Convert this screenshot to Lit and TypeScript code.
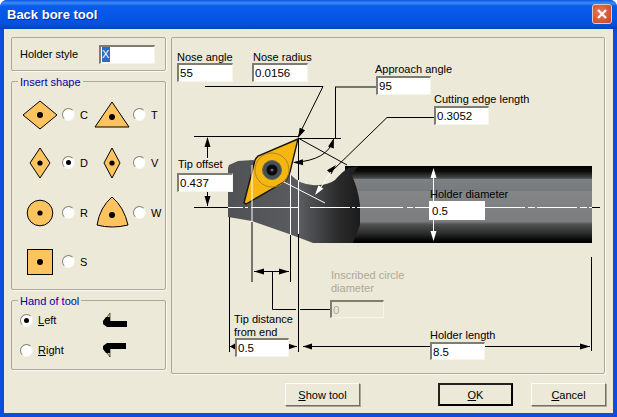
import { LitElement, html, css, svg } from "lit";
import { customElement } from "lit/decorators.js";
import { styleMap } from "lit/directives/style-map.js";

const X0 = 171;
const Y0 = 37;

const arrow = (x: number, y: number, deg: number, color = "#000", len = 10, half = 3) => {
  const a = (deg * Math.PI) / 180;
  const c = Math.cos(a), s = Math.sin(a);
  const bx = x - c * len, by = y - s * len;
  const pts = `${x},${y} ${bx - s * half},${by + c * half} ${bx + s * half},${by - c * half}`;
  return svg`<polygon points=${pts} fill=${color}></polygon>`;
};

const line = (d: string, color = "#000", w = 1) =>
  svg`<path d=${d} fill="none" stroke=${color} stroke-width=${w}></path>`;

const fields = [
  { x: 177, y: 63, w: 56, h: 19, v: "55" },
  { x: 252, y: 63, w: 56, h: 19, v: "0.0156" },
  { x: 376, y: 76, w: 55, h: 19, v: "95" },
  { x: 434, y: 106, w: 55, h: 19, v: "0.3052" },
  { x: 177, y: 173, w: 56, h: 19, v: "0.437" },
  { x: 429, y: 201, w: 56, h: 19, v: "0.5", white: true },
  { x: 330, y: 300, w: 54, h: 18, v: "0", off: true },
  { x: 235, y: 338, w: 54, h: 19, v: "0.5" },
  { x: 430, y: 342, w: 55, h: 18, v: "8.5" },
];

const labels = [
  { x: 177, y: 51, t: "Nose angle" },
  { x: 253, y: 51, t: "Nose radius" },
  { x: 375, y: 63, t: "Approach angle" },
  { x: 434, y: 93, t: "Cutting edge length" },
  { x: 178, y: 158, t: "Tip offset" },
  { x: 430, y: 188, t: "Holder diameter" },
  { x: 331, y: 269, t: "Inscribed circle", off: true },
  { x: 331, y: 282, t: "diameter", off: true },
  { x: 234, y: 313, t: "Tip distance" },
  { x: 234, y: 326, t: "from end" },
  { x: 430, y: 329, t: "Holder length" },
];

const centre: [number, number][] = [
  [228, 243], [245, 248], [251, 299], [310, 350], [352, 355], [357, 403], [407, 413], [415, 429],
  [485, 525], [528, 535], [537, 577], [580, 587], [589, 592],
];

const shapes: Record<string, unknown> = {
  C: svg`<svg class="ico" width="38" height="30" viewBox="21 100 38 30"><polygon points="23,115 40,101 57,115 40,129" class="ins"></polygon><circle cx="40" cy="115" r="3" fill="#000"></circle></svg>`,
  T: svg`<svg class="ico" width="36" height="30" viewBox="95 100 36 30"><polygon points="113,102 130,127 96,127" class="ins"></polygon><circle cx="113" cy="117" r="3" fill="#000"></circle></svg>`,
  D: svg`<svg class="ico" width="38" height="34" viewBox="22 146 38 34"><polygon points="41,148 51,163 41,178 31,163" class="ins"></polygon><circle cx="41" cy="163" r="2.6" fill="#000"></circle></svg>`,
  V: svg`<svg class="ico" width="36" height="34" viewBox="95 146 36 34"><polygon points="113,148 121,163 113,178 105,163" class="ins"></polygon><circle cx="113" cy="163" r="2.6" fill="#000"></circle></svg>`,
  R: svg`<svg class="ico" width="38" height="34" viewBox="22 196 38 34"><circle cx="41" cy="213" r="12.8" class="ins"></circle><circle cx="41" cy="213" r="2.6" fill="#000"></circle></svg>`,
  W: svg`<svg class="ico" width="36" height="34" viewBox="95 196 36 34"><path d="M113 197 Q125 207 129 225 Q113 229 98 225 Q101 207 113 197Z" class="ins"></path><circle cx="113" cy="215" r="3" fill="#000"></circle></svg>`,
  S: svg`<svg class="ico" width="38" height="30" viewBox="22 247 38 30"><rect x="28.5" y="249.5" width="25" height="25" class="ins"></rect><circle cx="41" cy="262" r="3" fill="#000"></circle></svg>`,
};

@customElement("app-root")
export class AppRoot extends LitElement {
  static styles = css`
    :host { display: block; width: 617px; height: 417px; font-family: "Liberation Sans", Arial, sans-serif; font-size: 11px; color: #000; background: #fff; overflow: hidden; }
    * { box-sizing: border-box; }
    .win { width: 617px; height: 417px; display: flex; flex-direction: column; border-radius: 7px 7px 0 0; overflow: hidden; background: #0a4ee0; }
    .title { height: 29px; flex: none; display: flex; align-items: center; justify-content: space-between; padding: 0 5px 0 7px;
      background: linear-gradient(180deg, #0a58e0 0, #3c8cf8 3px, #0a5cec 6px, #0555e6 18px, #0450d8 25px, #0340c0 29px); }
    .title b { color: #fff; font-size: 13px; letter-spacing: 0; text-shadow: 1px 1px 0 #0a2e9c; }
    .close { width: 20px; height: 20px; border: 1px solid #e8c8c0; border-radius: 3px; background: radial-gradient(circle at 40% 40%, #e47a5a, #c8421f); display: flex; align-items: center; justify-content: center; margin-top: -1px; }
    .client { flex: 1; margin: 0 4px 4px; background: #ece9d8; padding: 8px 7px 0; display: flex; flex-direction: column; }
    .main { display: flex; gap: 5px; height: 337px; }
    .left { width: 155px; display: flex; flex-direction: column; }
    .box { border: 1px solid #aca899; border-radius: 2px; box-shadow: 1px 1px 0 #fbfaf4; position: relative; }
    .holder { height: 34px; display: flex; align-items: center; padding-left: 8px; gap: 21px; }
    .insert { height: 209px; margin-top: 10px; padding: 18px 0 0 9px; display: grid; grid-template-columns: 73px 72px; grid-template-rows: 46px 50px 51px 30px; }
    .hand { height: 70px; margin-top: 10px; padding: 4px 0 0 8px; display: grid; grid-template-rows: 30px 30px; }
    .legend { position: absolute; left: 6px; top: -6px; background: #ece9d8; color: #0000a8; padding: 0 2px; line-height: 13px; }
    .cell { display: flex; align-items: center; align-self: start; }
    .cell .ico { flex: none; }
    .cell .opt { display: flex; align-items: center; gap: 5px; margin: -1px 0 0 3px; }
    .ins { fill: #fdc35f; stroke: #000; stroke-width: 1; }
    .radio { width: 13px; height: 13px; border-radius: 50%; background: #fff; border: 1px solid; border-color: #85836f #f4f2e6 #f8f7ee #85836f; display: flex; align-items: center; justify-content: center; flex: none; }
    .radio.on::after { content: ""; width: 5px; height: 5px; border-radius: 50%; background: #000; }
    .hrow { display: flex; align-items: center; }
    .hrow .radio { margin-right: 5px; }
    .hrow .txt { width: 64px; }
    .field { background: #fff; height: 19px; width: 56px; border: 1px solid; border-color: #7f7d70 #f6f5ec #f6f5ec #7f7d70; border-top-width: 2px; border-left-width: 2px; padding: 0 0 0 1px; font: 11.5px/15px "Liberation Sans", Arial, sans-serif; color: #000; outline: none; display: block; }
    .sel { display: inline-block; width: 8px; background: #316ac5; color: #fff; line-height: 15px; font-size: 11px; }
    .canvas { width: 434px; height: 337px; flex: none; }
    .canvas svg { position: absolute; left: 0; top: 0; }
    .lab, .canvas .field { position: absolute; }
    .lab { line-height: 13px; white-space: nowrap; font-size: 11px; }
    .lab.off { color: #aca899; }
    .canvas .field.off { background: #ece9d8; color: #aca899; }
    .canvas .field.white { border-color: #fff; border-width: 1px; padding-left: 2px; }
    .btns { display: flex; margin-top: 9px; }
    .btn { height: 23px; width: 75px; background: #ece9d8; border: 1px solid; border-color: #fff #716f64 #716f64 #fff; box-shadow: 1px 1px 0 #aca899; display: flex; align-items: center; justify-content: center; font-size: 11px; }
    .btn.def { border: 2px solid #000; border-color: #222 #000 #000 #222; box-shadow: none; }
    .b1 { margin-left: 274px; }
    .b2 { margin-left: 78px; }
    .b3 { margin-left: 18px; }
  `;

  private shape(k: string, on = false) {
    return html`<div class="cell">${shapes[k]}<div class="opt"><span class="radio ${on ? "on" : ""}"></span><span>${k}</span></div></div>`;
  }

  private diagram() {
    return html`<svg width="432" height="335" viewBox="${X0 + 1} ${Y0 + 1} 432 335">
      <defs>
        <linearGradient id="shaft" x1="0" y1="0" x2="0" y2="1">
          <stop offset="0" stop-color="#000"></stop>
          <stop offset="0.07" stop-color="#0c0c0c"></stop>
          <stop offset="0.16" stop-color="#4a4b4c"></stop>
          <stop offset="0.17" stop-color="#7e8184"></stop>
          <stop offset="0.32" stop-color="#777a7c"></stop>
          <stop offset="0.33" stop-color="#848586"></stop>
          <stop offset="0.72" stop-color="#7c7d7e"></stop>
          <stop offset="0.76" stop-color="#505152"></stop>
          <stop offset="0.88" stop-color="#2a2a2a"></stop>
          <stop offset="0.96" stop-color="#060606"></stop>
          <stop offset="1" stop-color="#000"></stop>
        </linearGradient>
        <linearGradient id="head" x1="0" y1="0" x2="1" y2="0">
          <stop offset="0" stop-color="#505256"></stop>
          <stop offset="0.55" stop-color="#5a5b5e"></stop>
          <stop offset="0.72" stop-color="#3e3f40"></stop>
          <stop offset="0.85" stop-color="#292929"></stop>
          <stop offset="1" stop-color="#1c1c1c"></stop>
        </linearGradient>
      </defs>

      <rect x="345" y="166" width="247" height="77" fill="url(#shaft)"></rect>
      <path d="M228 168 L229 165 L238 161 L253 160 L291 175 Q296 180 300 182 Q309 186 318 185 Q328 185 335 180 Q342 172 348 168 L358 166 L352 176 Q358 188 360 205 L360 225 L353 243 L313 243 L292 235 L252 221 L228 217Z" fill="url(#head)"></path>

      <path d="M298 139 L258 156 Q256 158 255 160 L244 203 L246 204 L284 182 Q287 180 290 172 Z" fill="#f5b70f" stroke="#1a1408" stroke-width="1.4"></path>
      <circle cx="272" cy="170" r="17" fill="none" stroke="#a8842c"></circle>
      <circle cx="272" cy="170" r="9.5" fill="#454f58" stroke="#6b6a50"></circle>
      <circle cx="272" cy="170" r="5.5" fill="#0b0b0b"></circle>
      <circle cx="272" cy="170" r="1.6" fill="#666"></circle>

      ${centre.map(([a, b]) => line(`M${a} 207.5H${b}`, "#fff"))}
      ${line("M194 207.5H228")}
      ${line("M592 207.5H600")}
      ${line("M252 165V222", "#fff")}
      ${line("M290.5 175V235", "#fff")}
      ${line("M298.5 180V234", "#fff")}
      ${line("M284 182L325 203", "#fff")}
      ${line("M229.5 217V352")}
      ${line("M252 222V282")}
      ${line("M290.5 235V282")}
      ${line("M298.5 138V180")}
      ${line("M298.5 234V352")}

      ${line("M205 86.5H323L298 137")}
      ${arrow(298, 138, 116)}
      ${line("M335.5 87V138M335 87H376")}
      ${line("M194 136.5H298M298 138.5H341")}
      ${line("M298 138L347 165")}
      ${line("M207.5 138V158M207.5 192V206")}
      ${arrow(207.5, 137, -90)}
      ${arrow(207.5, 206, 90)}
      ${line("M333 140Q328 160 294 162.5")}
      ${arrow(334, 138, -72)}
      ${arrow(293, 162.5, 178)}
      ${line("M434 117.5H387L331 172")}
      ${arrow(336, 165, -47)}
      ${line("M331 172L317 193", "#fff")}
      ${arrow(315, 195, 126, "#fff")}

      ${line("M433.5 172V201M433.5 220V238", "#fff")}
      ${arrow(433.5, 168, -90, "#fff")}
      ${arrow(433.5, 241, 90, "#fff")}

      ${line("M254 271.5H289M272.5 271V309.5H296M300 309.5H330")}
      ${arrow(254, 271.5, 180)}
      ${arrow(289, 271.5, 0)}
      ${line("M229 346.5H235M289 346.5H297")}
      ${arrow(230, 346.5, 180, "#000", 5, 3)}
      ${arrow(297, 346.5, 0, "#000", 9, 3)}
      ${arrow(303, 346.5, 180, "#000", 9, 3)}
      ${line("M303 346.5H430M485 346.5H590")}
      ${arrow(590, 346.5, 0, "#000", 10, 3)}
      ${line("M591.5 257V351")}
    </svg>`;
  }

  render() {
    return html`<div class="win">
      <div class="title"><b>Back bore tool</b>
        <div class="close"><svg width="12" height="12" viewBox="0 0 12 12"><path d="M2 2L10 10M10 2L2 10" stroke="#fff" stroke-width="2.2"></path></svg></div>
      </div>
      <div class="client">
        <div class="main">
          <div class="left">
            <div class="box holder"><span>Holder style</span><div class="field"><span class="sel">X</span></div></div>
            <div class="box insert"><span class="legend">Insert shape</span>
              ${this.shape("C")}${this.shape("T")}${this.shape("D", true)}${this.shape("V")}${this.shape("R")}${this.shape("W")}${this.shape("S")}
            </div>
            <div class="box hand"><span class="legend">Hand of tool</span>
              <div class="hrow"><span class="radio on"></span><span class="txt"><u>L</u>eft</span>
                <svg width="26" height="16" viewBox="0 0 26 16"><polygon points="2,9 8,1 8,9" fill="#fdc35f" stroke="#000" stroke-width=".6"></polygon><path d="M1 9L4 5H8V9H25V15H5L1 12Z" fill="#000"></path></svg></div>
              <div class="hrow"><span class="radio"></span><span class="txt"><u>R</u>ight</span>
                <svg width="26" height="16" viewBox="0 0 26 16"><polygon points="2,7 8,15 8,7" fill="#fdc35f" stroke="#000" stroke-width=".6"></polygon><path d="M1 7L4 11H8V7H24V1H5L1 4Z" fill="#000"></path></svg></div>
            </div>
          </div>
          <div class="box canvas">
            ${this.diagram()}
            ${labels.map((l) => html`<span class="lab ${l.off ? "off" : ""}" style=${styleMap({ left: l.x - X0 - 1 + "px", top: l.y - Y0 - 1 + "px" })}>${l.t}</span>`)}
            ${fields.map((f) => html`<input readonly class="field ${f.off ? "off" : ""} ${f.white ? "white" : ""}" .value=${f.v} style=${styleMap({ left: f.x - X0 - 1 + "px", top: f.y - Y0 - 1 + "px", width: f.w + "px", height: f.h + "px" })} />`)}
          </div>
        </div>
        <div class="btns">
          <div class="btn b1"><span><u>S</u>how tool</span></div>
          <div class="btn def b2"><span><u>O</u>K</span></div>
          <div class="btn b3"><span><u>C</u>ancel</span></div>
        </div>
      </div>
    </div>`;
  }
}
